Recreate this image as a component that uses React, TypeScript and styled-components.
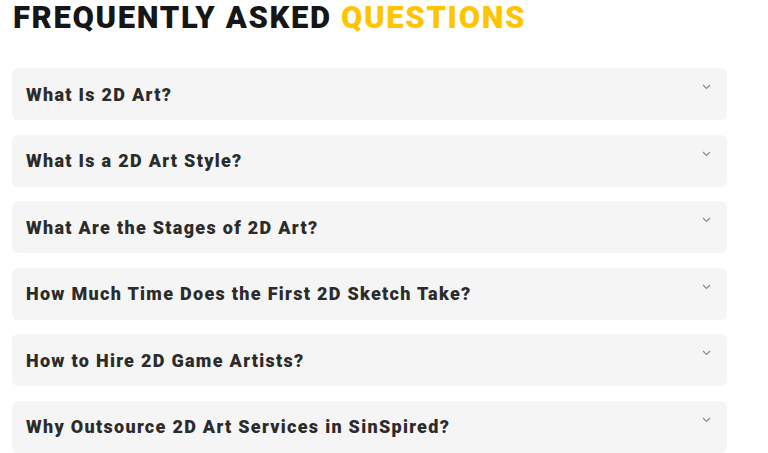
import React from 'react';
import styled, { createGlobalStyle } from 'styled-components';

const GlobalStyle = createGlobalStyle`
  body {
    margin: 0;
    background: #ffffff;
    font-family: Roboto, "Liberation Sans", sans-serif;
  }
`;

const Section = styled.section`
  padding: 0 41px 0 12px;
  display: flex;
  flex-direction: column;
`;

const Title = styled.h2`
  margin: 0 0 0 1px;
  height: 36px;
  font-size: 31px;
  line-height: 36px;
  font-weight: 900;
  text-transform: uppercase;
  color: #161616;
  letter-spacing: 1.65px;
  white-space: nowrap;
`;

const Accent = styled.span`
  color: #ffc400;
`;

const List = styled.div`
  margin-top: 32px;
  display: flex;
  flex-direction: column;
  gap: 14.5px;
`;

const Item = styled.div`
  height: 52px;
  background: #f5f5f5;
  border-radius: 6px;
  padding: 0 14px;
  display: flex;
  align-items: center;
  position: relative;
`;

const Question = styled.h3`
  margin: 0;
  font-size: 18px;
  font-weight: 900;
  color: #2b2b2b;
  letter-spacing: 1.3px;
  white-space: nowrap;
`;

const Chevron = styled.svg`
  position: absolute;
  right: 16px;
  top: 16px;
  width: 9px;
  height: 6px;
`;

const questions = [
  'What Is 2D Art?',
  'What Is a 2D Art Style?',
  'What Are the Stages of 2D Art?',
  'How Much Time Does the First 2D Sketch Take?',
  'How to Hire 2D Game Artists?',
  'Why Outsource 2D Art Services in SinSpired?',
];

const App: React.FC = () => {
  return (
    <>
      <GlobalStyle />
      <Section>
        <Title>
          Frequently Asked <Accent>Questions</Accent>
        </Title>
        <List>
          {questions.map((q, index) => (
            <Item key={index}>
              <Question>{q}</Question>
              <Chevron viewBox="0 0 9 6">
                <path d="M1 1l3.5 3.5L8 1" fill="none" stroke="#8a8a8a" strokeWidth="1.2" />
              </Chevron>
            </Item>
          ))}
        </List>
      </Section>
    </>
  );
};

export default App;
